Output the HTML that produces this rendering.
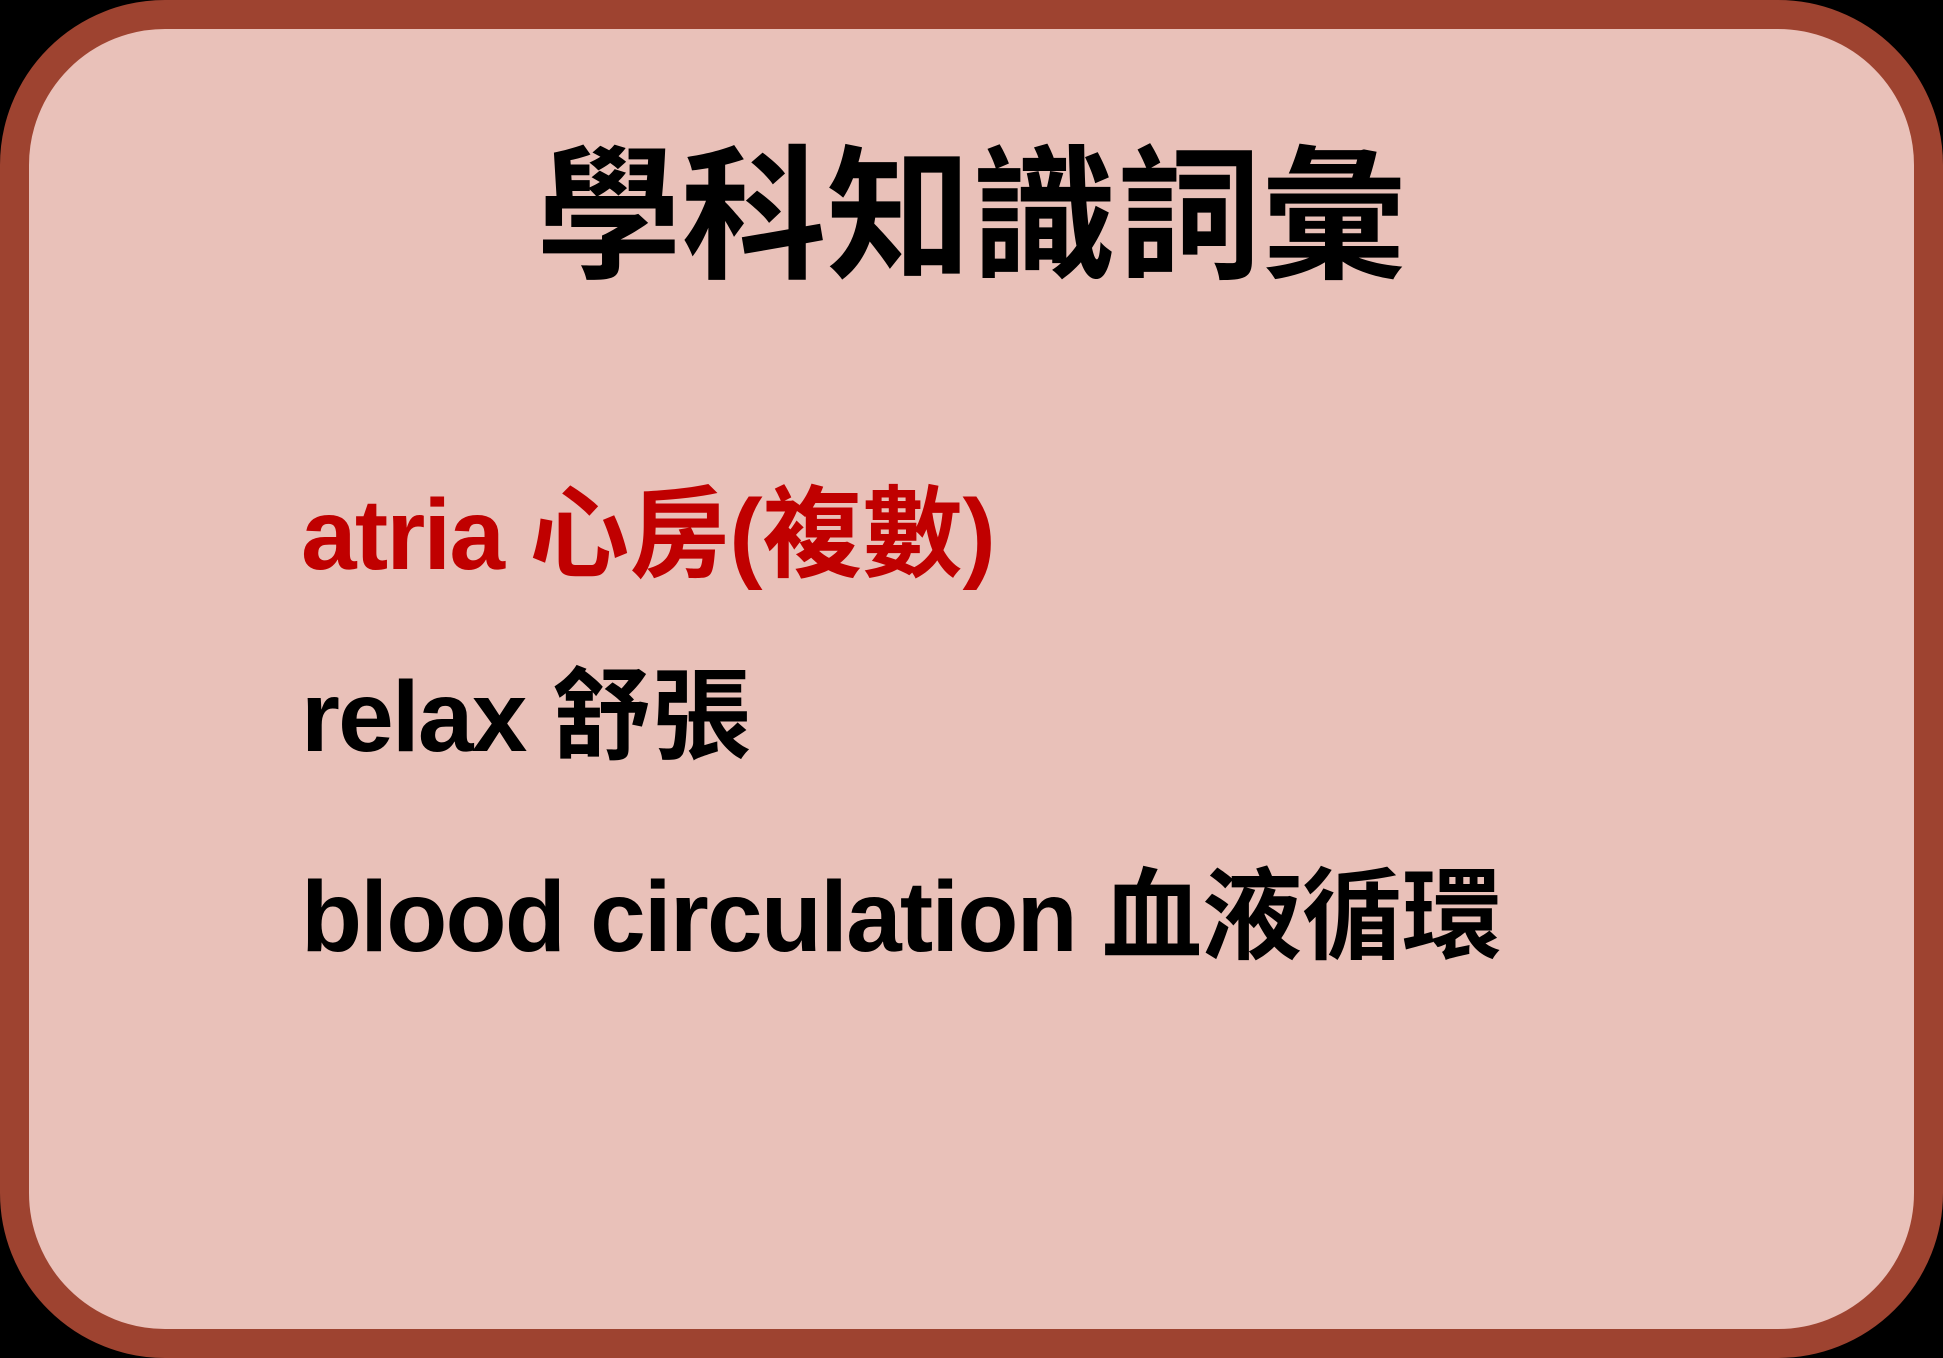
<!DOCTYPE html>
<html><head><meta charset="utf-8"><style>
html,body{margin:0;padding:0;background:#000;}
body{width:1943px;height:1358px;position:relative;overflow:hidden;}
.box{position:absolute;left:0;top:0;width:1943px;height:1358px;box-sizing:border-box;border:29px solid #9E4330;border-radius:165px;background:#E9C1B9;}
.t{position:absolute;left:0;width:1943px;top:145px;text-align:center;font:bold 145px/145px "Liberation Sans","Noto Sans CJK TC",sans-serif;color:#000;}
.l{position:absolute;left:301px;font:bold 100px/100px "Liberation Sans","Noto Sans CJK TC",sans-serif;color:#000;white-space:nowrap;letter-spacing:-1.8px;}
.l span{letter-spacing:0;}
</style></head><body>
<div class="box"></div>
<div class="t">學科知識詞彙</div>
<div class="l" style="top:485px;color:#C00000">atria <span>心房(複數)</span></div>
<div class="l" style="top:667px">relax <span>舒張</span></div>
<div class="l" style="top:867px">blood circulation <span>血液循環</span></div>
</body></html>
